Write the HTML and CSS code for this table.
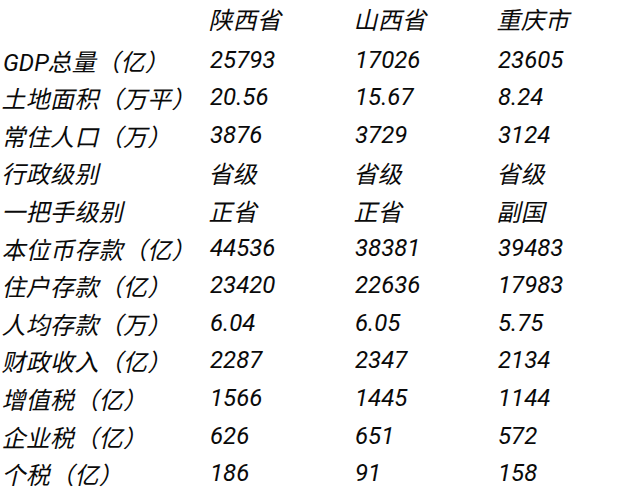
FILE: index.html
```html
<!DOCTYPE html>
<html lang="zh">
<head>
<meta charset="utf-8">
<link rel="stylesheet" href="styles.css">
</head>
<body>
<div class="table">
  <div class="cell head"></div><div class="cell head"><span class="cjk">陕西省</span></div><div class="cell head"><span class="cjk">山西省</span></div><div class="cell head"><span class="cjk">重庆市</span></div>
  <div class="cell"><span class="lat">GDP</span><span class="cjk">总量（亿）</span></div><div class="cell">25793</div><div class="cell">17026</div><div class="cell">23605</div>
  <div class="cell"><span class="cjk">土地面积（万平）</span></div><div class="cell">20.56</div><div class="cell">15.67</div><div class="cell">8.24</div>
  <div class="cell"><span class="cjk">常住人口（万）</span></div><div class="cell">3876</div><div class="cell">3729</div><div class="cell">3124</div>
  <div class="cell"><span class="cjk">行政级别</span></div><div class="cell"><span class="cjk">省级</span></div><div class="cell"><span class="cjk">省级</span></div><div class="cell"><span class="cjk">省级</span></div>
  <div class="cell"><span class="cjk">一把手级别</span></div><div class="cell"><span class="cjk">正省</span></div><div class="cell"><span class="cjk">正省</span></div><div class="cell"><span class="cjk">副国</span></div>
  <div class="cell"><span class="cjk">本位币存款（亿）</span></div><div class="cell">44536</div><div class="cell">38381</div><div class="cell">39483</div>
  <div class="cell"><span class="cjk">住户存款（亿）</span></div><div class="cell">23420</div><div class="cell">22636</div><div class="cell">17983</div>
  <div class="cell"><span class="cjk">人均存款（万）</span></div><div class="cell">6.04</div><div class="cell">6.05</div><div class="cell">5.75</div>
  <div class="cell"><span class="cjk">财政收入（亿）</span></div><div class="cell">2287</div><div class="cell">2347</div><div class="cell">2134</div>
  <div class="cell"><span class="cjk">增值税（亿）</span></div><div class="cell">1566</div><div class="cell">1445</div><div class="cell">1144</div>
  <div class="cell"><span class="cjk">企业税（亿）</span></div><div class="cell">626</div><div class="cell">651</div><div class="cell">572</div>
  <div class="cell"><span class="cjk">个税（亿）</span></div><div class="cell">186</div><div class="cell">91</div><div class="cell">158</div>
</div>
</body>
</html>
```
FILE: styles.css
```css
html, body {
  margin: 0;
  padding: 0;
  background: #ffffff;
}
body {
  width: 640px;
  height: 490px;
  overflow: hidden;
}
.table {
  display: grid;
  grid-template-columns: 207px 145px 143px 1fr;
  grid-auto-rows: 37.6px;
  padding: 4px 0 0 3px;
  font-family: Roboto, "Noto Sans CJK SC", sans-serif;
  font-style: italic;
  font-size: 24px;
  color: #0a0a0a;
}
.cell {
  display: flex;
  align-items: baseline;
  line-height: 37.6px;
  white-space: nowrap;
}
.cell.head {
  line-height: 30px;
}
.cjk {
  display: block;
  font-family: "Noto Sans CJK SC", sans-serif;
  font-style: normal;
  transform: skewX(-13deg);
  transform-origin: 50% 60%;
  letter-spacing: 0.3px;
}
```
